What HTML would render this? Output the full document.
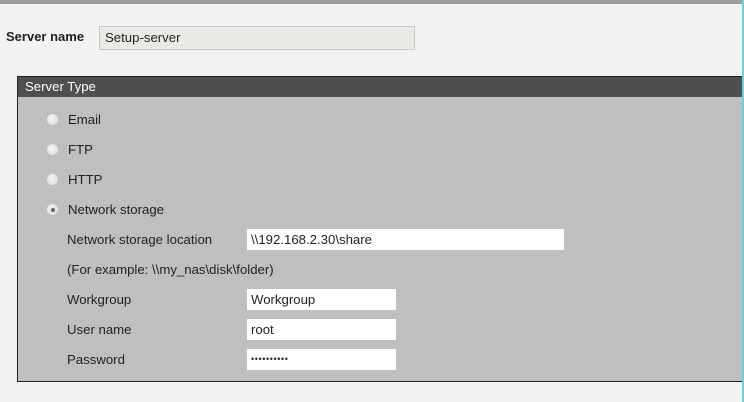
<!DOCTYPE html>
<html><head><style>
html,body{margin:0;padding:0}
body{width:744px;height:402px;background:#f2f2f2;position:relative;overflow:hidden;font-family:"Liberation Sans",Arial,sans-serif;font-size:13.2px;color:#222}
.abs{position:absolute}
.top{left:0;top:0;width:744px;height:4px;background:#9e9e9e}
.edge{left:742px;top:0;width:2px;height:402px;background:#6fd0d8}
.lbl{white-space:nowrap}
.inp{position:absolute;background:#fff;box-sizing:border-box;padding-left:4px;line-height:21px;height:21px;white-space:nowrap}
.radio{position:absolute;width:11px;height:11px;border-radius:50%;background:radial-gradient(circle at 40% 40%,#f4f4f4,#d8d8d8);}
.dot{position:absolute;left:3.5px;top:3.5px;width:4px;height:4px;border-radius:50%;background:#666}
</style></head><body>
<div class="abs top"></div>
<div class="abs lbl" style="left:6px;top:29px;font-weight:bold;font-size:13px">Server name</div>
<div class="inp" style="left:99px;top:26px;width:316px;height:24px;line-height:22px;background:#ebe9e4;border:1px solid #c6c8d0;padding-left:5px">Setup-server</div>
<div class="abs" style="left:17px;top:76px;width:726px;height:306px;box-sizing:border-box;border:1px solid #222;border-right:none;background:#bfbfbf">
 <div style="height:20px;background:#4f4f4f;color:#fff;font-size:13.2px;line-height:20px;padding-left:7px">Server Type</div>
</div>
<div class="radio" style="left:47px;top:114px"></div><div class="abs lbl" style="left:68px;top:112px">Email</div>
<div class="radio" style="left:47px;top:144px"></div><div class="abs lbl" style="left:68px;top:142px">FTP</div>
<div class="radio" style="left:47px;top:174px"></div><div class="abs lbl" style="left:68px;top:172px">HTTP</div>
<div class="radio" style="left:47px;top:204px"><div class="dot"></div></div><div class="abs lbl" style="left:68px;top:202px">Network storage</div>
<div class="abs lbl" style="left:67px;top:232px">Network storage location</div>
<div class="inp" style="left:247px;top:229px;width:317px">\\192.168.2.30\share</div>
<div class="abs lbl" style="left:67px;top:262px">(For example: \\my_nas\disk\folder)</div>
<div class="abs lbl" style="left:67px;top:292px">Workgroup</div>
<div class="inp" style="left:247px;top:289px;width:149px">Workgroup</div>
<div class="abs lbl" style="left:67px;top:322px">User name</div>
<div class="inp" style="left:247px;top:319px;width:149px">root</div>
<div class="abs lbl" style="left:67px;top:352px">Password</div>
<div class="inp" style="left:247px;top:349px;width:149px;font-size:9px;letter-spacing:0.6px">••••••••••</div>
<div class="abs edge"></div>
</body></html>
